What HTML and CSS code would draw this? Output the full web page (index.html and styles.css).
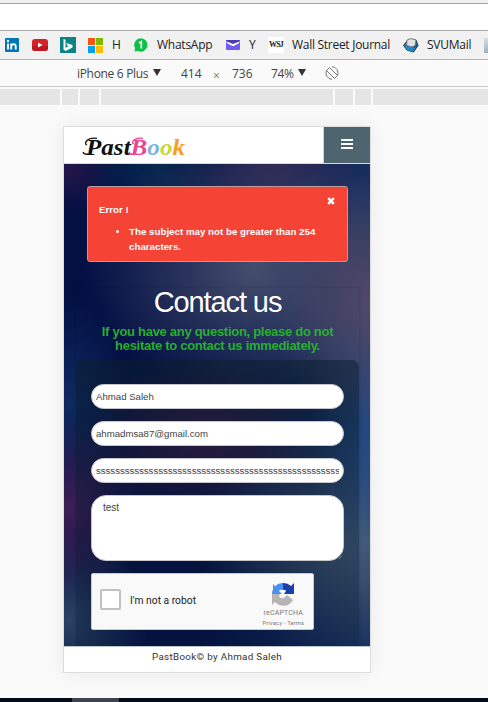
FILE: index.html
```html
<!DOCTYPE html>
<html lang="en">
<head>
<meta charset="utf-8">
<title>PastBook - Contact us</title>
<link rel="stylesheet" href="styles.css">
</head>
<body>
<div class="tabs-edge"></div>
<div class="address"></div>
<nav class="bookmarks">
  <svg width="14" height="14" viewBox="0 0 14 14"><rect width="14" height="14" rx="1" fill="#0077b5"/><path d="M3 5.5V11.500M6.200 11.500V5.500M6.200 8C6.500 5.800 10.700 5.400 10.700 8V11.500" fill="none" stroke="#fff" stroke-width="1.900"/><circle cx="3" cy="3" r="1.200" fill="#fff"/></svg>
  <svg width="16" height="12" viewBox="0 0 16 12"><rect width="16" height="12" rx="3" fill="#d7202a"/><path d="M0 7H16V9Q16 12 13 12H3Q0 12 0 9Z" fill="#bd1722"/><path d="M6 3.500L10.500 6L6 8.500Z" fill="#fff"/></svg>
  <svg width="16" height="16" viewBox="0 0 16 16"><rect width="16" height="16" fill="#0c8484"/><path d="M3.500 2L5.500 2.800V10.800L8.500 9.200L7.200 8.500L6.300 6L12.500 8V10.500L5.500 14L3.500 12.500Z" fill="#fff"/></svg>
  <svg width="15" height="15" viewBox="0 0 15 15"><path d="M0 0H7V7H0Z" fill="#f65314"/><path d="M8 0H15V7H8Z" fill="#7cbb00"/><path d="M0 8H7V15H0Z" fill="#00a1f1"/><path d="M8 8H15V15H8Z" fill="#ffbb00"/></svg>
  <span class="aitch">H</span>
  <svg width="14" height="14" viewBox="0 0 14 14"><path d="M7 .2A6.700 6.700 0 1 1 4 13L.4 13.600L1.200 10.300A6.700 6.700 0 0 1 7 .2Z" fill="#0dc143"/><path d="M5 5L7.300 3.700V10.500" fill="none" stroke="#fff" stroke-width="1.700"/></svg>
  <span class="whats">WhatsApp</span>
  <svg width="14" height="10" viewBox="0 0 14 10"><rect width="14" height="10" rx="1" fill="#705cf4"/><path d="M0 1Q0 0 1 0H13Q14 0 14 1V1.500L7 5.500L0 1.500Z" fill="#4b3db7"/><path d="M0 1.200L7 4L14 1.200L12.500 3.500L7 6.200L1.500 3.500Z" fill="#fff"/></svg>
  <span>Y</span>
  <b class="wsj">WSJ</b>
  <span class="wall">Wall Street Journal</span>
  <svg width="16" height="15" viewBox="0 0 16 15"><path d="M.5 7.500L4 3L13 2L15 7.500L10.500 14L4 12Z" fill="#247fba" stroke="#20252b"/><path d="M1 7.500L10.500 9.500L10 14L4 12Z" fill="#168aca"/><path d="M4 2Q8 -1 13 2L12 8L8 9L3.500 7Z" fill="#dde2e5" stroke="#777"/><path d="M10.500 9.500L15 6.500" stroke="#333"/></svg>
  <span class="svu">SVUMail</span>
  <i class="cut"></i>
</nav>
<div class="device-bar">
  <span class="device">iPhone 6 Plus</span><i class="arrow"></i>
  <span class="w">414</span><span class="times">×</span><span class="h">736</span>
  <span class="zoom">74%</span><i class="arrow"></i>
  <svg class="rotate" width="14" height="14" viewBox="0 0 14 14" fill="none" stroke="#777"><path d="M4.500 1.500L12.500 9.500L9.500 12.500L1.500 4.500Z"/><path d="M7 .6A6.400 6.400 0 0 1 12.500 9.500M1.500 4.500A6.400 6.400 0 0 0 7 13.400"/></svg>
</div>
<div class="ruler"><i></i><i></i><i></i><i></i><i></i><i></i><i></i></div>
<div class="stage">
  <div class="phone">
    <header>
      <svg width="112" height="34" viewBox="0 -6 112 34"><text class="logo" x="5" y="18.500" textLength="99" lengthAdjust="spacingAndGlyphs"><tspan>Past</tspan><tspan fill="#ec4590">B</tspan><tspan fill="#7db5dc">o</tspan><tspan fill="#c5d942">o</tspan><tspan fill="#f99d25">k</tspan></text><path d="M6 9Q3 8 6 4.500Q9 1.500 16 2.300M2 16Q3 19 7 17.800" fill="none" stroke="#111" stroke-width="1.300"/><path d="M53 8Q50 7 53 4Q56 1.500 62 2.300M48 16Q49 19 53 17.800" fill="none" stroke="#ec4590" stroke-width="1.300"/></svg>
      <div class="menu"><i></i><i></i><i></i></div>
    </header>
    <main>
      <section class="alert">
        <svg class="close" width="8" height="8" viewBox="0 0 8 8"><path d="M1.200 1.200L6.800 6.800M6.800 1.200L1.200 6.800" stroke="#fff" stroke-width="2.500"/></svg>
        <strong>Error !</strong>
        <ul><li>The subject may not be greater than 254 characters.</li></ul>
      </section>
      <section class="contact">
        <h1>Contact us</h1>
        <h2><span>If you have any question, please do not</span><br><span>hesitate to contact us immediately.</span></h2>
        <form>
          <div class="field">Ahmad Saleh</div>
          <div class="field">ahmadmsa87@gmail.com</div>
          <div class="field"><div class="clip">ssssssssssssssssssssssssssssssssssssssssssssssssssss</div></div>
          <div class="message">test<svg width="7" height="7" viewBox="0 0 7 7"><path d="M0 6L6 0M3 6L6 3" stroke="#999" stroke-width=".7"/></svg></div>
          <div class="captcha">
            <i class="check"></i><span class="robot">I'm not a robot</span>
            <div class="brand">
              <svg width="24" height="24" viewBox="0 0 24 24"><path d="M1 12A11 11 0 0 1 12 1V8Q9 7 8 9L11 12Z" fill="#4a90ee"/><path d="M2 2L6 6L2 10Z" fill="#4a90ee"/><path d="M12 1A11 11 0 0 1 20 4L23 1V12H13L15 9Q14 7 12 8Z" fill="#1c3fae"/><path d="M1 12H9L8 14Q9 17 13 16L16 13L22 18A11 11 0 0 1 4 20L1 23Z" fill="#b5b5b5"/></svg>
              <span>reCAPTCHA</span><small>Privacy - Terms</small>
            </div>
          </div>
        </form>
      </section>
    </main>
    <footer>PastBook© by Ahmad Saleh</footer>
  </div>
</div>
<div class="taskbar"><i></i></div>
</body>
</html>
```
FILE: styles.css
```css
* { box-sizing: border-box; }
body { margin: 0; width: 488px; height: 702px; overflow: hidden; background: #fafafa; display: flex; flex-direction: column; font-family: "Liberation Sans", sans-serif; }
svg, i { display: block; flex: none; }
.tabs-edge { height: 4px; background: #f1f1f1; border-bottom: 1px solid #a5a5a5; }
.address { height: 27px; background: #fff; border-bottom: 1px solid #a8a8a8; }
.bookmarks { height: 29px; background: #f1f1f1; border-bottom: 1px solid #b4b4b4; display: grid; grid-template-columns: 27px 28px 28px 25px 21px 23px 69px 23px 19px 24px 111px 24px 57px 12px; padding-left: 5px; align-items: center; font: 12px "Open Sans", sans-serif; color: #222; white-space: nowrap; }
.bookmarks span { line-height: 18px; }
.aitch { margin-left: -1px; }
.whats { letter-spacing: -.25px; }
.wall { letter-spacing: -.28px; }
.svu { letter-spacing: -.25px; }
.wsj { width: 16px; height: 16px; background: #fff; text-align: center; font: bold 8px/16px "Liberation Serif", serif; letter-spacing: -.8px; color: #222; }
.cut { width: 12px; height: 15px; background: linear-gradient(#d6dee3, #9eb1bd); }
.device-bar { height: 27px; border-bottom: 1px solid #ccc; padding-left: 77px; display: flex; align-items: center; font: 12px "Open Sans", sans-serif; color: #444; white-space: nowrap; }
.device { width: 76px; letter-spacing: -.32px; }
.arrow { border: 4px solid transparent; border-top: 7px solid #333; border-bottom: 0; margin-top: -2px; }
.w { margin-left: 20px; width: 32px; }
.times { width: 19px; color: #777; position: relative; top: 2px; }
.h { width: 39px; }
.zoom { width: 27px; letter-spacing: -.4px; }
.rotate { margin-left: 19px; }
.ruler { height: 18px; margin-top: 2px; display: grid; grid-template-columns: 60px 16px 19px 232px 18px 16px 115px; column-gap: 2px; padding-bottom: 2px; }
.ruler i { background: #e5e5e5; }
.stage { flex: 1; padding: 19px 0 0 63px; }
.phone { width: 308px; height: 547px; border: 1px solid #ddd; box-shadow: 0 0 18px #00000012; background: #fff; }
header { height: 37px; display: flex; justify-content: space-between; padding-left: 17px; border-bottom: 1px solid #d7dadd; }
header > svg { margin-top: 3px; }
.logo { font: italic bold 24px "Liberation Serif", serif; fill: #111; }
.menu { width: 47px; height: 36px; background: #4e646f; border-left: 1px solid #ccd2d6; display: flex; flex-direction: column; align-items: center; justify-content: center; gap: 2px; padding-bottom: 2px; }
.menu i { width: 12px; height: 2px; background: #fff; }
main { height: 482px; padding: 22px 11px 0 12px; background:
 radial-gradient(ellipse 100px 130px at 310px 140px, #574966e8, #57496600),
 radial-gradient(ellipse 80px 170px at 325px 265px, #25518bff, #25518b00),
 radial-gradient(ellipse 170px 120px at 305px 375px, #506376e8, #50637600),
 radial-gradient(ellipse 170px 130px at 190px 105px, #48506ef0, #48506e00),
 radial-gradient(ellipse 80px 90px at 5px 345px, #422057f0, #42205700),
 radial-gradient(ellipse 60px 110px at 5px 240px, #123068d0, #12306800),
 radial-gradient(ellipse 80px 90px at 5px 455px, #304968e0, #30496800),
 radial-gradient(ellipse 120px 80px at 140px 275px, #4b2049d0, #4b204900),
 radial-gradient(ellipse 70px 70px at 90px 0, #062e50d0, #062e5000),
 radial-gradient(ellipse 100px 60px at 210px 0, #322553d0, #32255300),
 radial-gradient(ellipse 60px 50px at 0 0, #261749, #26174900),
 linear-gradient(90deg, #031044 0 45%, #15305f); }
.alert { width: 261px; height: 76px; margin-left: 11px; border: 1px solid #b89b9f; border-radius: 3px; background: #f54336; color: #fff; padding: 15px 11px; font: bold 9.750px/15px "Liberation Sans", sans-serif; position: relative; }
.alert strong { display: block; }
.alert ul { margin: 7px 0 0; padding-left: 30px; }
.close { position: absolute; top: 10px; right: 12px; }
.contact { margin-top: 26px; height: 358px; text-align: center; box-shadow: 0 0 3px #0002; clip-path: inset(-3px -3px 0 -3px); }
h1 { margin: 0; font-size: 29px; line-height: 29px; letter-spacing: -1.100px; font-weight: 400; color: #fff; }
h2 { margin: 8px 0 0; height: 35px; font-size: 13px; line-height: 14px; color: #29ad32; white-space: nowrap; letter-spacing: -.29px; }
form { height: 286px; border-radius: 7px 7px 0 0; background: linear-gradient(#0b1f2b80, #07192b60 35%, #07193340); padding: 24px 15px 0; text-align: left; }
.field { height: 25px; margin-bottom: 12px; border: 1px solid #c5c5cc; border-radius: 13px; background: #fff; padding: 0 4px; font-size: 9.650px; line-height: 23px; color: #444; }
.clip { overflow: hidden; white-space: nowrap; letter-spacing: -.03px; }
.message { height: 66px; border: 1px solid #c5c5cc; border-radius: 15px; background: #fff; padding: 5px 11px; font-size: 10px; line-height: 14px; color: #444; position: relative; }
.message svg { position: absolute; right: 0; bottom: 0; }
.captcha { width: 223px; height: 57px; margin-top: 12px; background: #f9f9f9; border: 1px solid #c9c9ce; border-radius: 2px; display: flex; align-items: center; padding-left: 8px; }
.check { width: 21px; height: 21px; border: 2px solid #c1c1c1; border-radius: 2px; background: #fff; margin-top: -4px; }
.robot { width: 125px; margin: -2px 0 0 9px; font: 10.300px Roboto, sans-serif; color: #222; }
.brand { width: 60px; display: flex; flex-direction: column; align-items: center; color: #777; font: 7px/9px Roboto, sans-serif; padding-top: 6px; letter-spacing: .2px; }
.brand span { margin-top: 3px; }
.brand small { font-size: 5.700px; line-height: 9px; margin-top: 1px; }
footer { height: 26px; border-top: 1px solid #bcc3cf; text-align: center; font: 9.800px/20px Roboto, sans-serif; letter-spacing: .32px; color: #333; }
.taskbar { height: 4px; background: #000b1b; flex: none; }
.taskbar i { width: 47px; height: 4px; margin-left: 72px; background: #3b4350; }
```
